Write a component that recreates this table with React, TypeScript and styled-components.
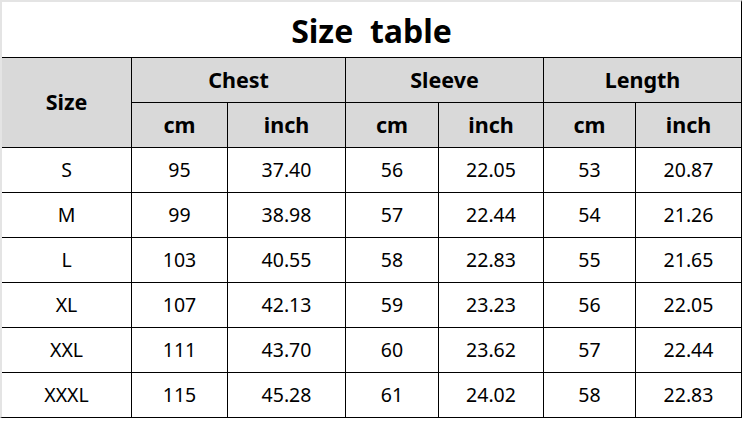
import styled, { createGlobalStyle } from "styled-components";

const GlobalStyle = createGlobalStyle`
  html, body {
    margin: 0;
    padding: 0;
    background: #ffffff;
  }
  body {
    font-family: "Noto Sans", "Open Sans", sans-serif;
    color: #000;
  }
`;

type Row = [string, string, string, string, string, string, string];

const rows: Row[] = [
  ["S", "95", "37.40", "56", "22.05", "53", "20.87"],
  ["M", "99", "38.98", "57", "22.44", "54", "21.26"],
  ["L", "103", "40.55", "58", "22.83", "55", "21.65"],
  ["XL", "107", "42.13", "59", "23.23", "56", "22.05"],
  ["XXL", "111", "43.70", "60", "23.62", "57", "22.44"],
  ["XXXL", "115", "45.28", "61", "24.02", "58", "22.83"],
];

const groups = ["Chest", "Sleeve", "Length"];

export default function App() {
  return (
    <>
      <GlobalStyle />
      <Sheet>
        <Title>Size&nbsp;&nbsp;table</Title>
        <SizeHead>Size</SizeHead>
        {groups.map((g) => (
          <GroupHead key={g}>{g}</GroupHead>
        ))}
        {groups.map((g) => (
          <UnitPair key={g}>
            <UnitHead>cm</UnitHead>
            <UnitHead>inch</UnitHead>
          </UnitPair>
        ))}
        {rows.map((r) =>
          r.map((v, i) => <Cell key={r[0] + i}>{v}</Cell>)
        )}
      </Sheet>
    </>
  );
}

const Sheet = styled.div`
  display: grid;
  grid-template-columns: 129px 95px 117px 92px 104px 91px 105px;
  grid-template-rows: 55px 44px 44px repeat(6, 44px);
  gap: 1px;
  width: max-content;
  background: #000;
  border-top: 2px solid #e4e4e4;
  border-left: 2px solid #e4e4e4;
  border-right: 1px solid #000;
  border-bottom: 1px solid #000;
`;

const Title = styled.div`
  grid-column: 1 / -1;
  background: #fff;
  display: flex;
  align-items: center;
  justify-content: center;
  font-size: 32px;
  font-weight: 700;
  padding-top: 2px;
`;

const HeadCell = styled.div`
  background: #d9d9d9;
  display: flex;
  align-items: center;
  justify-content: center;
  font-size: 21.5px;
  font-weight: 700;
  padding-bottom: 2px;
`;

const SizeHead = styled(HeadCell)`
  grid-row: 2 / 4;
`;

const GroupHead = styled(HeadCell)`
  grid-column: span 2;
`;

const UnitPair = styled.div`
  display: contents;
`;

const UnitHead = styled(HeadCell)``;

const Cell = styled.div`
  background: #fff;
  display: flex;
  align-items: center;
  justify-content: center;
  font-size: 19.5px;
  font-weight: 400;
  color: #000;
  padding-bottom: 2px;
`;
